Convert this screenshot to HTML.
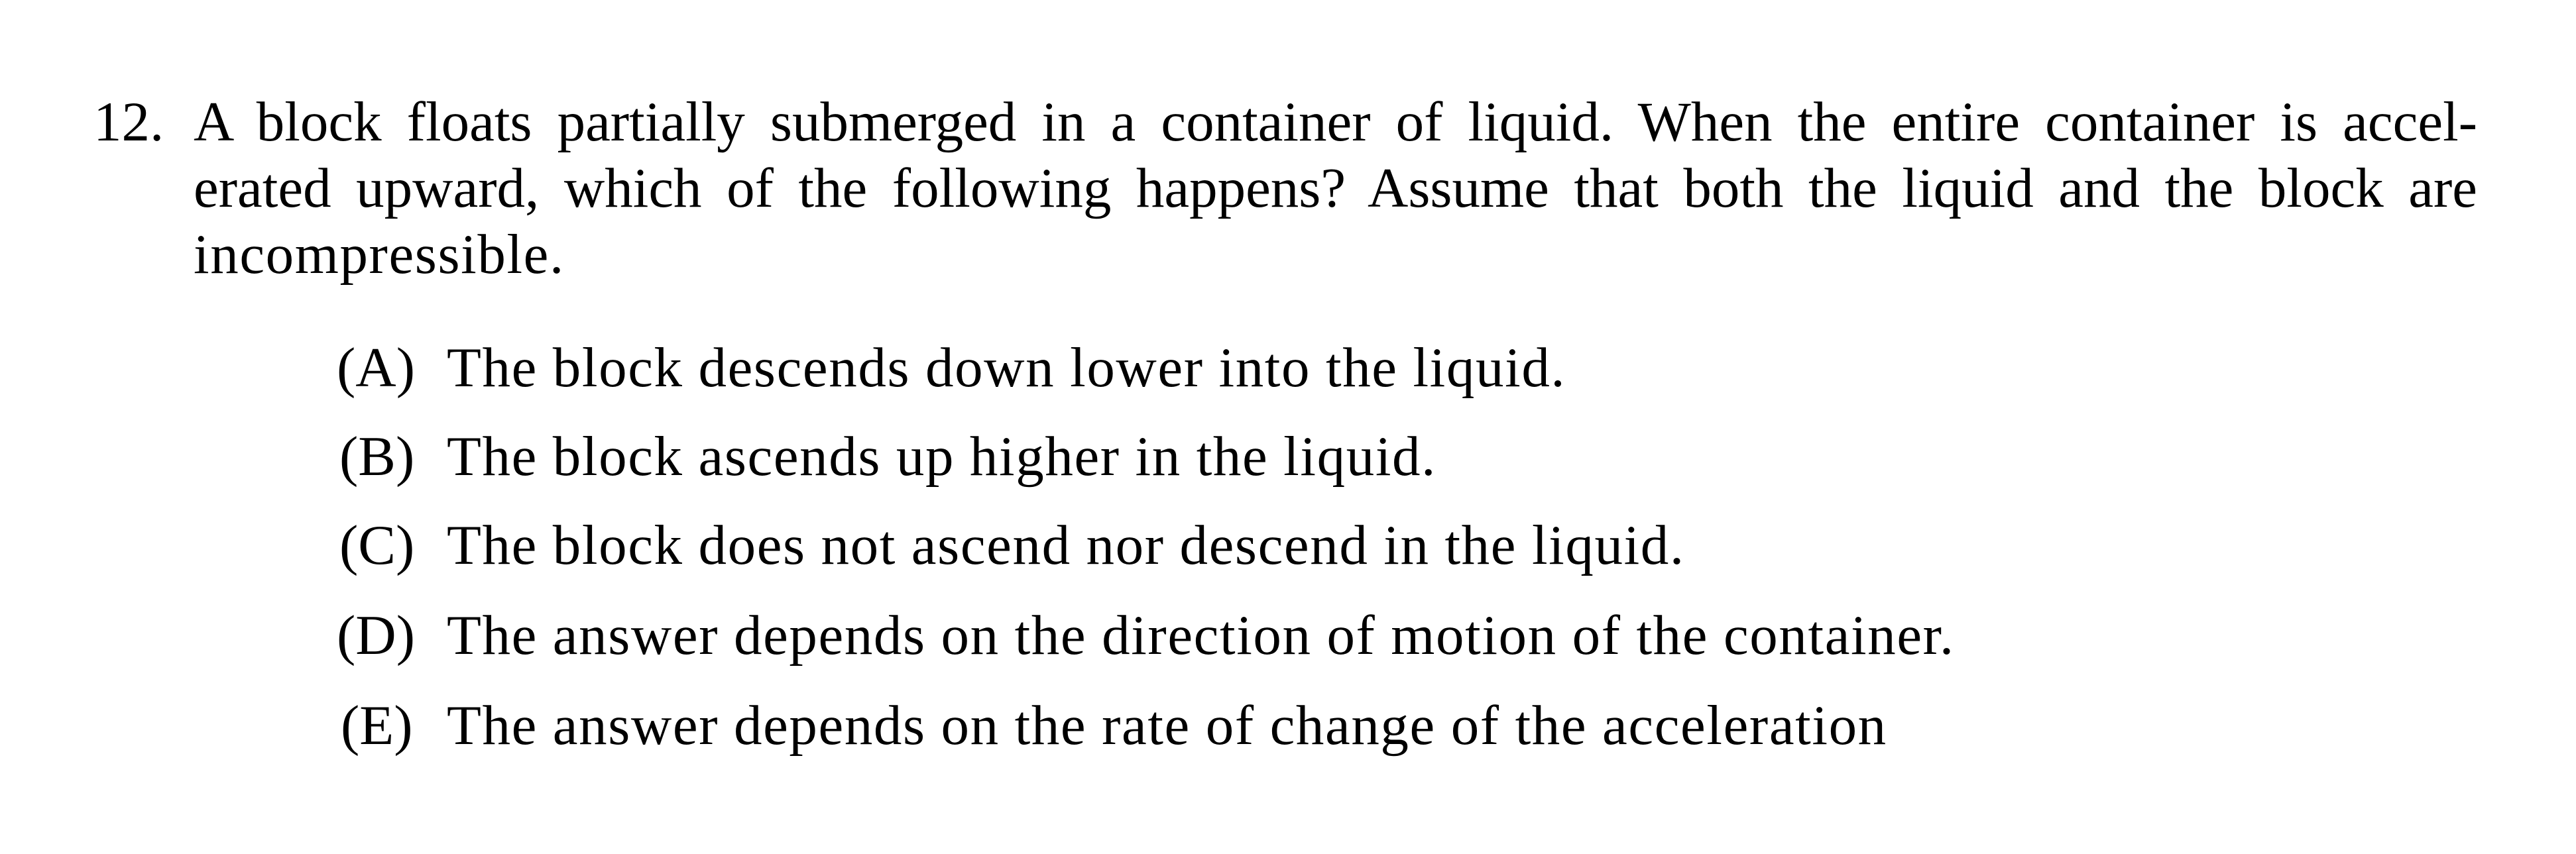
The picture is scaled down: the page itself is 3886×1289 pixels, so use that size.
<!DOCTYPE html>
<html><head><meta charset="utf-8"><style>
html,body{margin:0;padding:0;background:#fff;}
body{width:3886px;height:1289px;position:relative;overflow:hidden;font-family:"Liberation Serif",serif;font-size:85px;color:#000;}
.l{position:absolute;line-height:100px;white-space:nowrap;}
.o{letter-spacing:1.6px;}
.j{text-align:justify;text-align-last:justify;white-space:normal;}
</style></head><body>
<div class="l" style="left:141px;top:134px;">12.</div>
<div class="l j" style="left:292px;top:134px;width:3445px;">A block floats partially submerged in a container of liquid. When the entire container is accel-</div>
<div class="l j" style="left:292px;top:234px;width:3445px;">erated upward, which of the following happens? Assume that both the liquid and the block are</div>
<div class="l" style="left:292px;top:334px;letter-spacing:1.6px;">incompressible.</div>

<div class="l" style="left:508px;top:505px;">(A)</div>
<div class="l o" style="left:674px;top:505px;">The block descends down lower into the liquid.</div>
<div class="l" style="left:512px;top:639px;">(B)</div>
<div class="l o" style="left:674px;top:639px;">The block ascends up higher in the liquid.</div>
<div class="l" style="left:512px;top:773px;">(C)</div>
<div class="l o" style="left:674px;top:773px;">The block does not ascend nor descend in the liquid.</div>
<div class="l" style="left:508px;top:909px;">(D)</div>
<div class="l o" style="left:674px;top:909px;">The answer depends on the direction of motion of the container.</div>
<div class="l" style="left:514px;top:1045px;">(E)</div>
<div class="l o" style="left:674px;top:1045px;">The answer depends on the rate of change of the acceleration</div>
</body></html>
